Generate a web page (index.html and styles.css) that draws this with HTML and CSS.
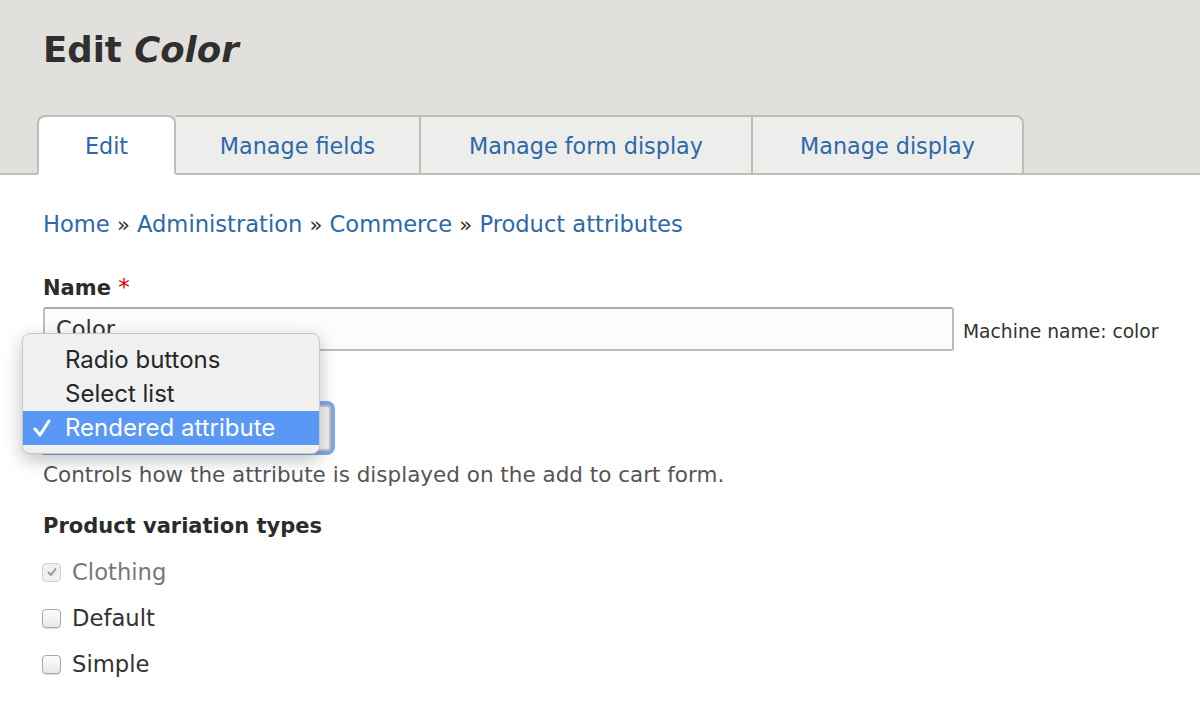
FILE: index.html
```html
<!DOCTYPE html>
<html>
<head>
<meta charset="utf-8">
<link rel="stylesheet" href="styles.css">
</head>
<body>
<header class="head">
  <h1 class="title">Edit <em>Color</em></h1>
  <nav class="tabs">
    <a class="tab tab-active">Edit</a>
    <a class="tab tab-fields">Manage fields</a>
    <a class="tab tab-form">Manage form display</a>
    <a class="tab tab-last">Manage display</a>
  </nav>
</header>
<main class="content">
  <div class="crumbs">
    <a>Home</a> <span class="sep">»</span> <a>Administration</a> <span class="sep">»</span> <a>Commerce</a> <span class="sep">»</span> <a>Product attributes</a>
  </div>
  <div class="field">
    <label class="label">Name <span class="req">*</span></label>
    <div class="name-row">
      <div class="input">Color</div>
      <span class="machine">Machine name: color</span>
    </div>
  </div>
  <div class="field field-widget">
    <div class="select" aria-label="Element type"></div>
    <div class="desc">Controls how the attribute is displayed on the add to cart form.</div>
  </div>
  <div class="field field-types">
    <div class="label">Product variation types</div>
    <ul class="checks">
      <li class="check disabled"><span class="box checked"><svg viewBox="0 0 12 12" width="12" height="12"><path d="M2.5 6.5 L5 9 L9.5 3" fill="none" stroke="#9a9a9a" stroke-width="2" stroke-linecap="round" stroke-linejoin="round"/></svg></span>Clothing</li>
      <li class="check"><span class="box"></span>Default</li>
      <li class="check"><span class="box"></span>Simple</li>
    </ul>
  </div>
  <div class="popup">
    <div class="opt">Radio buttons</div>
    <div class="opt">Select list</div>
    <div class="opt opt-sel"><svg class="tick" viewBox="0 0 18 20" width="18" height="20"><path d="M2 11 L7 17 L16 3" fill="none" stroke="#ffffff" stroke-width="3" stroke-linecap="round" stroke-linejoin="round"/></svg>Rendered attribute</div>
  </div>
</main>
</body>
</html>
```

FILE: styles.css
```css
html, body {
  margin: 0;
  padding: 0;
  background: #ffffff;
}
body {
  font-family: "DejaVu Sans", "Noto Sans", sans-serif;
  color: #333333;
  width: 1200px;
  height: 714px;
  overflow: hidden;
  position: relative;
}
.head {
  background: #e1e0dc;
  padding: 0 0 0 37px;
  height: 173px;
  border-bottom: 2px solid #bebdb8;
  display: flex;
  flex-direction: column;
}
.title {
  margin: 28px 0 0 6px;
  font-size: 35.5px;
  line-height: 44px;
  font-weight: bold;
  color: #2f2f2f;
}
.title em {
  font-style: italic;
}
.tabs {
  display: flex;
  margin-top: 43px;
  height: 60px;
  margin-bottom: -2px;
}
.tab {
  display: flex;
  align-items: center;
  justify-content: center;
  box-sizing: border-box;
  height: 60px;
  background: #ededeb;
  border: 2px solid #bebdb8;
  border-left: none;
  color: #2d69a8;
  font-size: 22.3px;
  padding-top: 2px;
}
.tab-active {
  background: #ffffff;
  border-left: 2px solid #bebdb8;
  border-bottom-color: #ffffff;
  border-radius: 8px 8px 0 0;
  width: 139px;
}
.tab-fields { width: 245px; }
.tab-form { width: 332px; }
.tab-last { width: 271px; border-radius: 0 8px 0 0; }

.content {
  padding: 0 0 0 43px;
}
.crumbs {
  margin-top: 35px;
  font-size: 22.6px;
  line-height: 28px;
  color: #2d69a8;
}
.crumbs .sep {
  color: #333333;
  font-size: 21px;
}
.field {
  margin-top: 36px;
}
.label {
  display: block;
  font-weight: bold;
  font-size: 21px;
  line-height: 24px;
  color: #2b2b2b;
}
.req {
  color: #e00000;
  font-weight: normal;
  font-size: 23px;
}
.name-row {
  display: flex;
  align-items: center;
  margin-top: 7px;
}
.input {
  box-sizing: border-box;
  width: 911px;
  height: 44px;
  border: 2px solid #bcbcbc;
  border-top-color: #a8a8a8;
  border-radius: 3px;
  background: #fcfcfa;
  font-size: 22.6px;
  line-height: 40px;
  padding-left: 11px;
  color: #333;
}
.machine {
  margin-left: 9px;
  font-size: 18.7px;
  color: #333;
  padding-top: 4px;
}
.field-widget {
  margin-top: 54px;
}
.select {
  box-sizing: border-box;
  margin-left: -2px;
  width: 290px;
  height: 46px;
  border: 2px solid #c4c4c4;
  border-radius: 4px;
  background: #f4f4f4;
  box-shadow: 0 0 0 4px #7fa9ea;
}
.desc {
  margin-top: 10px;
  font-size: 21.5px;
  line-height: 28px;
  color: #555555;
}
.field-types {
  margin-top: 25px;
}
.checks {
  list-style: none;
  margin: 11px 0 0 0;
  padding: 0;
}
.check {
  display: flex;
  align-items: center;
  height: 46px;
  font-size: 22.7px;
  color: #333;
}
.check.disabled {
  color: #787878;
}
.box {
  box-sizing: border-box;
  width: 19px;
  height: 19px;
  border: 1px solid #a9a9a9;
  border-radius: 4px;
  background: linear-gradient(#fdfdfd, #e8e8e8);
  box-shadow: 0 1px 1px rgba(0,0,0,0.15);
  margin-left: -1px;
  margin-right: 11px;
  display: flex;
  align-items: center;
  justify-content: center;
}
.box.checked {
  border-color: #cfcfcf;
  background: #f0f0f0;
  box-shadow: none;
}
.popup {
  position: absolute;
  left: 22px;
  top: 333px;
  width: 298px;
  box-sizing: border-box;
  padding: 9px 0 8px;
  background: #f0f0f0;
  border: 1px solid #c7c7c7;
  border-radius: 8px;
  box-shadow: 0 6px 18px rgba(0,0,0,0.25);
  font-family: "Inter", "Liberation Sans", Arial, sans-serif;
  overflow: hidden;
}
.opt {
  height: 34px;
  line-height: 34px;
  font-size: 24px;
  padding-left: 42px;
  color: #262626;
  position: relative;
}
.opt-sel {
  background: #5a98f6;
  color: #ffffff;
}
.tick {
  position: absolute;
  left: 10px;
  top: 7px;
}
```
